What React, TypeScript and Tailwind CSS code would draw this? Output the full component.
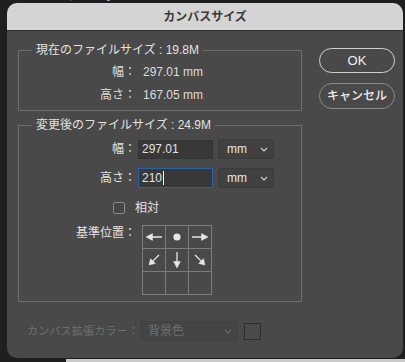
import React from 'react';

const font = "font-['Liberation_Sans','Noto_Sans_CJK_JP',sans-serif]";

const Chevron: React.FC<{ className?: string }> = ({ className }) => (
  <svg width="8" height="5" viewBox="0 0 8 5" className={className}>
    <path d="M1 1 L4 4 L7 1" fill="none" stroke="currentColor" strokeWidth="1.1" />
  </svg>
);

// right-pointing arrow, rotated for the other directions
const Arrow: React.FC<{ angle: number; len?: number }> = ({ angle, len = 8 }) => (
  <svg width="22" height="22" viewBox="0 0 22 22">
    <g transform={`rotate(${angle} 11 11)`} fill="#e6e6e6" stroke="#e6e6e6">
      <line x1={11 - len} y1="11" x2="13" y2="11" strokeWidth="1.3" />
      <path d={`M12.5 7.6 L${11 + len} 11 L12.5 14.4 Z`} strokeWidth="0.5" />
    </g>
  </svg>
);

const AnchorGrid: React.FC = () => {
  const cells: React.ReactNode[] = [
    <Arrow angle={180} />,
    <svg width="22" height="22" viewBox="0 0 22 22"><circle cx="11" cy="11" r="3.6" fill="#e6e6e6" /></svg>,
    <Arrow angle={0} />,
    <Arrow angle={135} len={7} />,
    <Arrow angle={90} />,
    <Arrow angle={45} len={7} />,
    null,
    null,
    null,
  ];
  return (
    <div className="grid grid-cols-[23px_23px_23px] grid-rows-[23px_23px_23px] border-t border-l border-[#7c7c7c]">
      {cells.map((c, i) => (
        <div key={i} className="flex items-center justify-center border-r border-b border-[#7c7c7c]">
          {c}
        </div>
      ))}
    </div>
  );
};

const Group: React.FC<{ legend: string; className?: string; children: React.ReactNode }> = ({ legend, className, children }) => (
  <div className={`border border-[#6d6d6d] ${className ?? ''}`}>
    <div className="-mt-[9px] ml-[13px] w-fit bg-[#494949] px-[4px] text-[12px] leading-[16px] text-[#e2e2e2]">
      {legend}
    </div>
    {children}
  </div>
);

const UnitSelect: React.FC = () => (
  <div className="flex h-[20px] w-[56px] items-center justify-between rounded-[2px] border border-[#3a3a3a] bg-[#414141] pl-[8px] pr-[5px] text-[12px] text-[#e6e6e6]">
    <span>mm</span>
    <Chevron className="text-[#cfcfcf]" />
  </div>
);

export default function App() {
  return (
    <div className={`h-[362px] w-[405px] overflow-hidden bg-[#1f1f1f] ${font}`}>
      <div className="h-[3px] overflow-hidden pl-[68px]">
        <div className="-mt-[11px] text-[12px] leading-[14px] text-[#bdbdbd]">アートボード 1</div>
      </div>

      <div className="ml-[7px] flex h-[355px] w-[396px] flex-col overflow-hidden rounded-[10px] bg-[#494949]">
        {/* title bar */}
        <div className="flex h-[28px] shrink-0 items-center justify-center border-b border-[#2e2e2e] bg-[#d4d4d4] text-[12px] font-bold text-[#3a3a3a]">
          カンバスサイズ
        </div>

        <div className="flex pl-[11px]">
          <div className="flex w-[284px] flex-col">
            <Group legend="現在のファイルサイズ : 19.8M" className="mt-[19px] h-[61px]">
              <div className="mt-[5px] flex flex-col gap-[5px] text-[12px] leading-[18px] text-[#dcdcdc]">
                <div className="flex">
                  <span className="w-[117px] text-right">幅：</span>
                  <span className="ml-[7px]">297.01 mm</span>
                </div>
                <div className="flex">
                  <span className="w-[117px] text-right">高さ：</span>
                  <span className="ml-[7px]">167.05 mm</span>
                </div>
              </div>
            </Group>

            <Group legend="変更後のファイルサイズ : 24.9M" className="mt-[14px] h-[177px]">
              <div className="mt-[6px] flex items-center text-[12px] text-[#e2e2e2]">
                <span className="w-[117px] text-right">幅：</span>
                <div className="ml-[2px] flex h-[19px] w-[75px] items-center border border-[#333] bg-[#383838] pl-[3px]">
                  297.01
                </div>
                <div className="ml-[5px]"><UnitSelect /></div>
              </div>
              <div className="mt-[9px] flex items-center text-[12px] text-[#e2e2e2]">
                <span className="w-[117px] text-right">高さ：</span>
                <div className="ml-[2px] flex h-[20px] w-[75px] items-center border border-[#2d61a6] bg-[#383838] pl-[3px]">
                  210<span className="ml-[1px] h-[14px] w-[1px] bg-[#f0f0f0]" />
                </div>
                <div className="ml-[5px]"><UnitSelect /></div>
              </div>
              <div className="mt-[11px] flex items-center pl-[94px] text-[12px] text-[#e2e2e2]">
                <span className="h-[12px] w-[12px] rounded-[2px] border border-[#8a8a8a] bg-[#454545]" />
                <span className="ml-[10px]">相対</span>
              </div>
              <div className="mt-[8px] flex items-start text-[12px] text-[#e2e2e2]">
                <span className="w-[117px] pt-[1px] text-right leading-[14px]">基準位置：</span>
                <div className="ml-[6px]"><AnchorGrid /></div>
              </div>
            </Group>
          </div>

          <div className="ml-[17px] flex w-[76px] flex-col">
            <button className="mt-[17px] h-[25px] rounded-full border-[1.5px] border-[#cfcfcf] text-[13px] text-[#f2f2f2]">
              OK
            </button>
            <button className="mt-[10px] h-[26px] rounded-full border border-[#8a8a8a] text-[12px] font-medium text-[#ececec]">
              キャンセル
            </button>
          </div>
        </div>

        <div className="mt-[19px] flex items-center pl-[20px] text-[12px] text-[#6f6f6f]">
          <span className="w-[113px] whitespace-nowrap text-[11px] tracking-[0.2px]">カンバス拡張カラー：</span>
          <div className="flex h-[20px] w-[98px] items-center justify-between border border-[#424242] bg-[#444444] pl-[7px] pr-[5px]">
            <span>背景色</span>
            <Chevron className="text-[#6a6a6a]" />
          </div>
          <span className="ml-[6px] h-[17px] w-[17px] border border-[#2e2e2e] bg-[#4a4a4a]" />
        </div>
      </div>

      <div className="ml-[66px] mt-px h-[4px] bg-[#c9c9c9]" />
    </div>
  );
}
